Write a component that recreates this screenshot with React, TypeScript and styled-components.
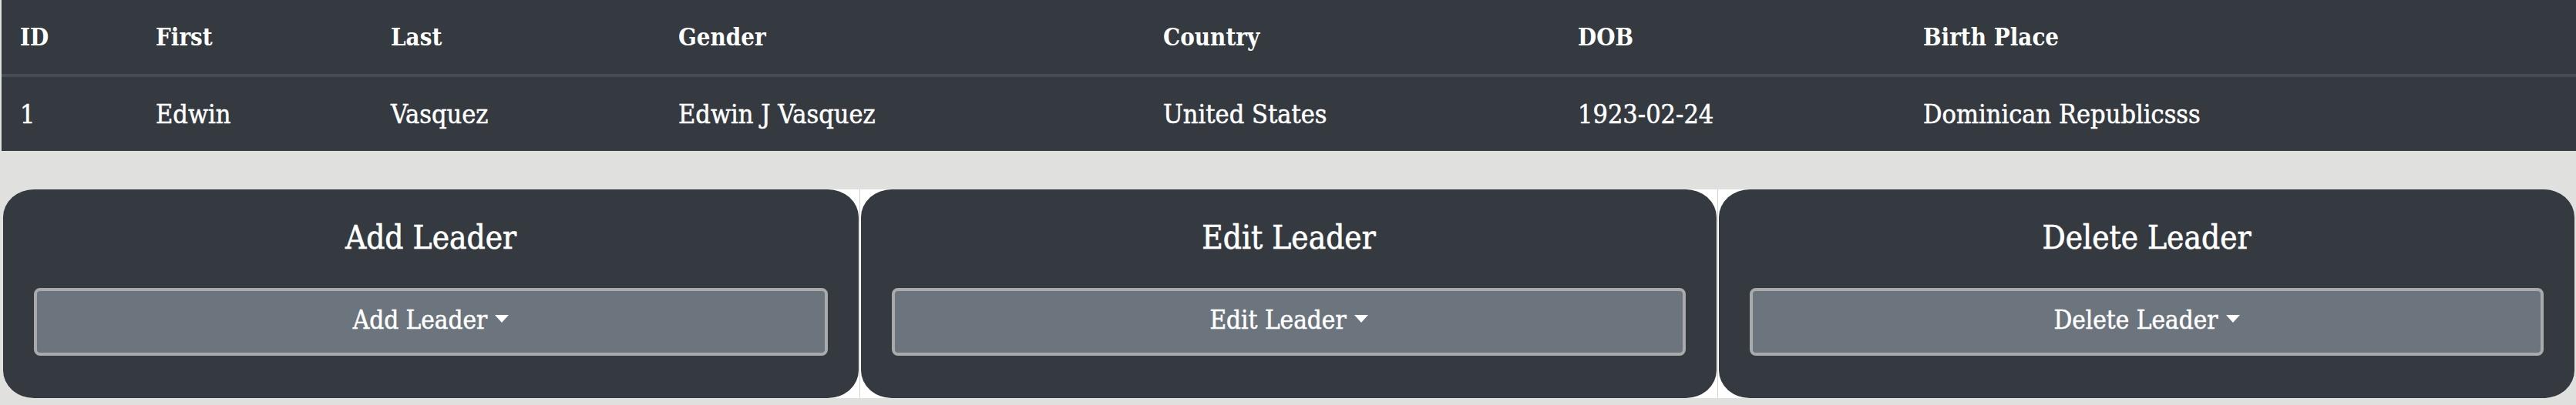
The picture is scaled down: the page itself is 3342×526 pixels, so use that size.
import React from "react";
import styled, { createGlobalStyle } from "styled-components";

const GlobalStyle = createGlobalStyle`
  html, body {
    margin: 0;
    padding: 0;
    background: #e0e0de;
    font-family: "DejaVu Serif Condensed", "DejaVu Serif", serif;
    color: #ffffff;
  }
  * { box-sizing: border-box; }
`;

const Page = styled.div`
  display: flex;
  flex-direction: column;
  width: 3342px;
`;

const Table = styled.table`
  margin-left: 2px;
  width: 3340px;
  border-collapse: collapse;
  table-layout: fixed;
  background: #343a40;
  color: #ffffff;
`;

const HeadCell = styled.th`
  text-align: left;
  font-weight: bold;
  font-size: 31px;
  line-height: 48px;
  padding: 24px;
  border-bottom: 4px solid #454d55;
  white-space: nowrap;
`;

const Cell = styled.td`
  font-size: 34px;
  line-height: 48px;
  padding: 24px;
  white-space: nowrap;
  -webkit-text-stroke: 0.5px #ffffff;
`;

const CardRow = styled.div`
  display: flex;
  margin-top: 50px;
  padding: 0 2px 0 4px;
`;

const Card = styled.section`
  position: relative;
  z-index: 1;
  flex: 1 1 0;
  background: #343a40;
  border-radius: 40px / 36px;
  padding: 38px 40px 55px;
  display: flex;
  flex-direction: column;
  align-items: stretch;
`;

const Separator = styled.div`
  flex: 0 0 83px;
  margin: 0 -40px;
  background: linear-gradient(
    90deg,
    #ffffff 0,
    #ffffff 40.5px,
    #d3d3d3 40.5px,
    #d3d3d3 42px,
    #ffffff 42px,
    #ffffff 100%
  );
`;

const CardTitle = styled.h5`
  margin: 0 0 40px;
  font-size: 42px;
  line-height: 50px;
  font-weight: normal;
  text-align: center;
  -webkit-text-stroke: 0.6px #ffffff;
`;

const DropButton = styled.button`
  height: 88px;
  background: #6c757d;
  border: 4px solid #a9aaab;
  border-radius: 8px;
  color: #ffffff;
  font-family: inherit;
  font-size: 33px;
  line-height: 76px;
  padding: 0 0 4px;
  text-align: center;
  cursor: pointer;
  -webkit-text-stroke: 0.5px #ffffff;

  &::after {
    content: "";
    display: inline-block;
    margin-left: 10px;
    vertical-align: 8px;
    border-top: 10px solid #ffffff;
    border-left: 9px solid transparent;
    border-right: 9px solid transparent;
  }
`;

const columns = [
  { key: "id", label: "ID", width: 176 },
  { key: "first", label: "First", width: 305 },
  { key: "last", label: "Last", width: 373 },
  { key: "gender", label: "Gender", width: 629 },
  { key: "country", label: "Country", width: 538 },
  { key: "dob", label: "DOB", width: 448 },
  { key: "birth", label: "Birth Place", width: 871 },
];

const rows = [
  {
    id: "1",
    first: "Edwin",
    last: "Vasquez",
    gender: "Edwin J Vasquez",
    country: "United States",
    dob: "1923-02-24",
    birth: "Dominican Republicsss",
  },
];

const actions = ["Add Leader", "Edit Leader", "Delete Leader"];

export default function App() {
  return (
    <>
      <GlobalStyle />
      <Page>
        <Table>
          <colgroup>
            {columns.map((c) => (
              <col key={c.key} style={{ width: c.width }} />
            ))}
          </colgroup>
          <thead>
            <tr>
              {columns.map((c) => (
                <HeadCell key={c.key}>{c.label}</HeadCell>
              ))}
            </tr>
          </thead>
          <tbody>
            {rows.map((r) => (
              <tr key={r.id}>
                {columns.map((c) => (
                  <Cell key={c.key}>{(r as Record<string, string>)[c.key]}</Cell>
                ))}
              </tr>
            ))}
          </tbody>
        </Table>
        <CardRow>
          {actions.map((a, i) => (
            <React.Fragment key={a}>
              {i > 0 && <Separator />}
              <Card>
                <CardTitle>{a}</CardTitle>
                <DropButton type="button">{a}</DropButton>
              </Card>
            </React.Fragment>
          ))}
        </CardRow>
      </Page>
    </>
  );
}
